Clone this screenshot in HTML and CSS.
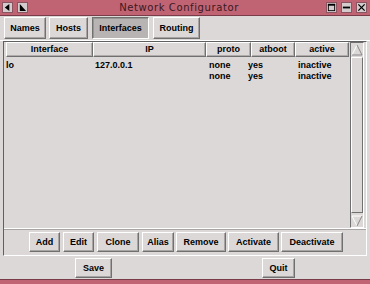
FILE: index.html
```html
<!DOCTYPE html>
<html lang="en">
<head>
    <meta charset="UTF-8">
    <title>Network Configurator</title>
    <link rel="stylesheet" href="styles.css">
</head>
<body>
    <div class="window">
        <div class="titlebar">
            <div class="tb-left">
                <span class="tb-btn">
                    <svg width="10" height="10" viewBox="0 0 10 10"><polygon points="7,1 2,5 7,9" fill="#000"/></svg>
                </span>
                <span class="tb-btn">
                    <svg width="10" height="10" viewBox="0 0 10 10"><polygon points="2,1 2,9 9,9" fill="#000"/></svg>
                </span>
            </div>
            <div class="title">Network Configurator</div>
            <div class="tb-right">
                <span class="tb-btn">
                    <svg width="10" height="10" viewBox="0 0 10 10"><rect x="1.5" y="1.5" width="7" height="7" fill="none" stroke="#000"/><rect x="1" y="1" width="8" height="2" fill="#000"/></svg>
                </span>
                <span class="tb-btn">
                    <svg width="10" height="10" viewBox="0 0 10 10"><rect x="1" y="4" width="8" height="2" fill="#000"/></svg>
                </span>
                <span class="tb-btn">
                    <svg width="10" height="10" viewBox="0 0 10 10"><path d="M1.5 1.5 L8.5 8.5 M8.5 1.5 L1.5 8.5" stroke="#000" stroke-width="1.4"/></svg>
                </span>
            </div>
        </div>

        <div class="tabs">
            <button class="btn tab t-names">Names</button>
            <button class="btn tab t-hosts">Hosts</button>
            <button class="btn tab t-if active">Interfaces</button>
            <button class="btn tab t-route">Routing</button>
        </div>

        <div class="panel">
            <div class="listbox">
                <div class="list">
                    <div class="head">
                        <div class="hd h-if">Interface</div>
                        <div class="hd h-ip">IP</div>
                        <div class="hd h-proto">proto</div>
                        <div class="hd h-boot">atboot</div>
                        <div class="hd h-act">active</div>
                    </div>
                    <div class="row">
                        <div class="c-if">lo</div>
                        <div class="c-ip">127.0.0.1</div>
                        <div class="c-proto">none</div>
                        <div class="c-boot">yes</div>
                        <div class="c-act">inactive</div>
                    </div>
                    <div class="row">
                        <div class="c-if"></div>
                        <div class="c-ip"></div>
                        <div class="c-proto">none</div>
                        <div class="c-boot">yes</div>
                        <div class="c-act">inactive</div>
                    </div>
                </div>
                <div class="scrollbar">
                    <div class="arrow">
                        <svg width="12" height="12" viewBox="0 0 12 12"><polyline points="1,11 6,1" fill="none" stroke="#fff"/><polyline points="6,1 11,11 1,11" fill="none" stroke="#888"/></svg>
                    </div>
                    <div class="track"><div class="thumb"></div></div>
                    <div class="arrow">
                        <svg width="12" height="12" viewBox="0 0 12 12"><polyline points="11,1 1,1 6,11" fill="none" stroke="#fff"/><polyline points="6,11 11,1" fill="none" stroke="#888"/></svg>
                    </div>
                </div>
            </div>
            <div class="actions">
                <button class="btn b-add">Add</button>
                <button class="btn b-edit">Edit</button>
                <button class="btn b-clone">Clone</button>
                <button class="btn b-alias">Alias</button>
                <button class="btn b-remove">Remove</button>
                <button class="btn b-activate">Activate</button>
                <button class="btn b-deact">Deactivate</button>
            </div>
        </div>

        <div class="bottom">
            <button class="btn save">Save</button>
            <button class="btn quit">Quit</button>
        </div>
        <div class="edge"></div>
    </div>
</body>
</html>
```

FILE: styles.css
```css
body {
    margin: 0;
    padding: 0;
    background-color: #dcd8d8;
    font-family: 'Liberation Sans', Arial, sans-serif;
    font-size: 9px;
    font-weight: bold;
    color: #000;
}
.window {
    width: 370px;
    height: 284px;
    display: flex;
    flex-direction: column;
    background-color: #dcd8d8;
    overflow: hidden;
}
.titlebar {
    height: 16px;
    flex: none;
    background-color: #c06474;
    display: flex;
    align-items: center;
    border-bottom: 1px solid #7a3c48;
    box-sizing: border-box;
}
.tb-left, .tb-right {
    display: flex;
    gap: 4px;
    padding: 0 2px;
}
.tb-right {
    padding-right: 3px;
}
.tb-btn {
    width: 11px;
    height: 11px;
    background-color: #d4cccc;
    border: 1px solid #8a5460;
    box-sizing: border-box;
    display: flex;
    align-items: center;
    justify-content: center;
}
.tb-btn svg {
    width: 9px;
    height: 9px;
}
.title {
    flex: 1;
    text-align: center;
    font-weight: normal;
    font-family: 'DejaVu Sans', sans-serif;
    font-size: 10px;
    letter-spacing: 0.6px;
    color: #3a1820;
    padding-left: 4px;
}
.btn {
    font-family: 'Liberation Sans', Arial, sans-serif;
    font-size: 9px;
    font-weight: bold;
    color: #000;
    background-color: #dcd8d8;
    border: 1px solid;
    border-color: #fff #707070 #707070 #fff;
    box-shadow: inset -1px -1px 0 #a8a4a4;
    height: 20px;
    padding: 0;
    margin: 0;
    cursor: pointer;
    flex: none;
}
.tabs {
    display: flex;
    flex: none;
    height: 25px;
    padding: 1px 0 0 4px;
    box-sizing: border-box;
    border-bottom: 1px solid #fff;
}
.tab {
    height: 22px;
}
.t-names { width: 42px; }
.t-hosts { width: 39px; margin-left: 3px; }
.t-if { width: 57px; margin-left: 4px; }
.t-route { width: 47px; margin-left: 4px; }
.tab.active {
    background-color: #b8b4b4;
    border-color: #707070 #fff #fff #707070;
    box-shadow: inset 1px 1px 0 #989494;
}
.panel {
    flex: none;
    margin: 0 3px;
    border: 1px solid;
    border-color: #606060 #fff #fff #606060;
    display: flex;
    flex-direction: column;
    height: 215px;
    box-sizing: border-box;
}
.listbox {
    display: flex;
    flex: none;
    height: 187px;
    border-bottom: 1px solid #fff;
    box-shadow: 0 1px 0 #a8a4a4;
    padding: 0 2px 0 2px;
    box-sizing: border-box;
}
.list {
    width: 343px;
}
.head {
    display: flex;
    height: 15px;
    margin-bottom: 3px;
}
.hd {
    text-align: center;
    border: 1px solid;
    border-color: #fff #707070 #707070 #fff;
    box-shadow: inset -1px -1px 0 #b0acac;
    box-sizing: border-box;
    line-height: 13px;
}
.h-if { width: 87px; }
.h-ip { width: 113px; }
.h-proto { width: 45px; }
.h-boot { width: 44px; }
.h-act { width: 54px; }
.row {
    display: flex;
    height: 11px;
    line-height: 11px;
}
.c-if { width: 89px; }
.c-ip { width: 114px; }
.c-proto { width: 39px; }
.c-boot { width: 50px; }
.c-act { width: 51px; }
.scrollbar {
    width: 14px;
    margin-left: 1px;
    display: flex;
    flex-direction: column;
    border: 1px solid;
    border-color: #707070 #fff #fff #707070;
    box-sizing: border-box;
}
.arrow {
    height: 13px;
    display: flex;
    align-items: center;
    justify-content: center;
}
.track {
    flex: 1;
    display: flex;
    padding: 1px 0;
}
.thumb {
    flex: 1;
    border: 1px solid;
    border-color: #fff #707070 #707070 #fff;
}
.actions {
    display: flex;
    padding: 3px 0 0 25px;
}
.b-add { width: 31px; }
.b-edit { width: 31px; margin-left: 3px; }
.b-clone { width: 42px; margin-left: 3px; }
.b-alias { width: 32px; margin-left: 3px; }
.b-remove { width: 50px; margin-left: 2px; }
.b-activate { width: 51px; margin-left: 2px; }
.b-deact { width: 62px; margin-left: 2px; }
.bottom {
    display: flex;
    flex: none;
    padding: 2px 0 0 75px;
}
.save { width: 37px; }
.quit { width: 33px; margin-left: 150px; }
.edge {
    margin-top: auto;
    flex: none;
    height: 4px;
    background-color: #c06474;
    border-top: 1px solid #7a3c48;
}
```
